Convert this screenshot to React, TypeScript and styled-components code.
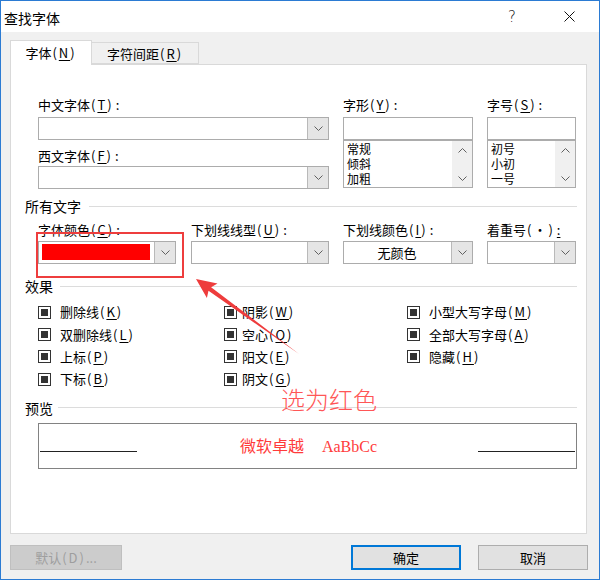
import React from "react";
import styled, { createGlobalStyle } from "styled-components";

const Global = createGlobalStyle`
  html, body { margin: 0; padding: 0; background: #ffffff; }
  body { font-family: "Noto Sans CJK SC", "Noto Sans", sans-serif; color: #000; }
  * { box-sizing: border-box; }
`;

const Window = styled.div`
  position: relative;
  width: 600px;
  height: 580px;
  border: 1px solid #2b7bd3;
  display: flex;
  flex-direction: column;
  background: #f0f0f0;
  overflow: hidden;
`;

const TitleBar = styled.div`
  height: 31px;
  flex-shrink: 0;
  background: #ffffff;
  display: flex;
  align-items: center;
  padding: 0 7px 0 3px;
`;

const Title = styled.div`
  flex: 1;
  font-size: 14px;
  line-height: 16px;
  margin-top: 2px;
`;

const CaptionButton = styled.div`
  width: 46px;
  height: 31px;
  display: flex;
  align-items: center;
  justify-content: center;
  font-family: "DejaVu Sans", sans-serif;
  font-weight: 300;
  font-size: 15px;
  color: #111;
  & + & { margin-left: 11px; }
`;

const Body = styled.div`
  flex: 1;
  display: flex;
  flex-direction: column;
  padding: 8px 12px 0 9px;
`;

const TabRow = styled.div`
  height: 24px;
  display: flex;
  align-items: flex-end;
  position: relative;
  z-index: 1;
`;

const Tab = styled.div<{ $active?: boolean; $w: number }>`
  width: ${(p) => p.$w}px;
  height: ${(p) => (p.$active ? 25 : 22)}px;
  margin-bottom: ${(p) => (p.$active ? -1 : 0)}px;
  margin-left: ${(p) => (p.$active ? 0 : -1)}px;
  border: 1px solid #d9d9d9;
  border-bottom: ${(p) => (p.$active ? "none" : "1px solid #d9d9d9")};
  background: ${(p) => (p.$active ? "#ffffff" : "#f0f0f0")};
  display: flex;
  align-items: center;
  justify-content: center;
  font-size: 13px;
  padding-bottom: ${(p) => (p.$active ? 2 : 0)}px;
`;

const Panel = styled.div`
  height: 470px;
  flex-shrink: 0;
  background: #ffffff;
  border: 1px solid #d9d9d9;
  padding: 32px 9px 0 14px;
  display: flex;
  flex-direction: column;
`;

const TopGrid = styled.div`
  margin-left: 13px;
  display: grid;
  grid-template-columns: 291px 130px 89px;
  column-gap: 14px;
`;

const Column = styled.div`
  display: flex;
  flex-direction: column;
`;

const Label = styled.div<{ $mt?: number }>`
  height: 16px;
  line-height: 16px;
  font-size: 13px;
  white-space: nowrap;
  margin-top: ${(p) => p.$mt ?? 0}px;
`;

const Mnemonic = styled.span`
  margin-left: 1px;
  letter-spacing: 2px;
  u { text-decoration-thickness: 1px; text-underline-offset: 2px; }
`;

const Tail = styled.span`
  margin-left: 2px;
  u { text-decoration-thickness: 1px; text-underline-offset: 2px; }
`;

const ComboBox = styled.div<{ $w?: number; $mt?: number }>`
  width: ${(p) => (p.$w ? `${p.$w}px` : "100%")};
  height: 23px;
  margin-top: ${(p) => p.$mt ?? 0}px;
  border: 1px solid #acacac;
  background: #ffffff;
  display: flex;
  align-items: stretch;
`;

const ComboValue = styled.div<{ $center?: boolean }>`
  flex: 1;
  display: flex;
  align-items: center;
  justify-content: ${(p) => (p.$center ? "center" : "flex-start")};
  font-size: 13px;
  padding: 2px 4px 3px 3px;
`;

const ColorSwatch = styled.div`
  width: 100%;
  height: 100%;
  background: #ff0000;
`;

const DropButton = styled.div`
  width: 21px;
  background: #e5e5e5;
  border-left: 1px solid #b9b9b9;
  display: flex;
  align-items: center;
  justify-content: center;
`;

const TextBox = styled.div`
  height: 23px;
  margin-top: 4px;
  border: 1px solid #acacac;
  background: #fff;
`;

const ListBox = styled.div`
  height: 48px;
  border: 1px solid #acacac;
  background: #fff;
  display: flex;
`;

const ListItems = styled.div`
  flex: 1;
  padding: 0 0 0 3px;
  display: flex;
  flex-direction: column;
`;

const ListItem = styled.div`
  height: 15px;
  font-size: 12px;
  line-height: 15px;
`;

const ScrollTrack = styled.div`
  width: 20px;
  background: #f0f0f0;
  display: flex;
  flex-direction: column;
  justify-content: space-between;
  align-items: center;
  padding: 7px 0 6px;
`;

const GroupHeader = styled.div<{ $mt: number; $gap: number }>`
  height: 16px;
  margin-top: ${(p) => p.$mt}px;
  display: flex;
  align-items: center;
  font-size: 14px;
  line-height: 16px;
  gap: ${(p) => p.$gap}px;
  &::after {
    content: "";
    flex: 1;
    height: 1px;
    background: #dcdcdc;
  }
`;

const FieldRow = styled.div`
  margin-left: 13px;
  margin-top: 8px;
  display: grid;
  grid-template-columns: 153px 152px 144px 89px;
`;

const CheckGrid = styled.div`
  margin-left: 13px;
  margin-top: 7px;
  display: grid;
  grid-template-columns: 186px 183px 1fr;
  grid-auto-rows: 22.4px;
`;

const CheckItem = styled.div<{ $gap: number }>`
  display: flex;
  align-items: center;
  gap: ${(p) => p.$gap}px;
  font-size: 13px;
  line-height: 16px;
  white-space: nowrap;
`;

const CheckBox = styled.div`
  width: 13px;
  height: 13px;
  border: 1px solid #333;
  background: #fff;
  display: flex;
  align-items: center;
  justify-content: center;
  &::after {
    content: "";
    width: 7px;
    height: 7px;
    background: #333;
  }
`;

const Preview = styled.div`
  margin-left: 13px;
  margin-top: 7px;
  height: 46px;
  border: 1px solid #828282;
  display: flex;
  align-items: center;
  justify-content: space-between;
  padding: 0 1px;
`;

const PreviewLine = styled.div`
  width: 97px;
  height: 1px;
  background: #222;
  align-self: flex-end;
  margin-bottom: 16px;
`;

const PreviewText = styled.div`
  color: #ff3b3b;
  font-size: 16px;
  display: flex;
  align-items: baseline;
  margin-top: -1px;
  margin-left: 2px;
`;

const PreviewLatin = styled.span`
  font-family: "Liberation Serif", serif;
  font-size: 16px;
  margin-left: 18px;
`;

const Footer = styled.div`
  margin-top: 11px;
  margin-right: -1px;
  display: flex;
  align-items: center;
`;

const Button = styled.div<{ $w: number; $variant?: "default" | "disabled" | "normal" }>`
  width: ${(p) => p.$w}px;
  height: 25px;
  display: flex;
  align-items: center;
  justify-content: center;
  font-size: 13px;
  background: ${(p) => (p.$variant === "disabled" ? "#cccccc" : "#e1e1e1")};
  color: ${(p) => (p.$variant === "disabled" ? "#9e9e9e" : "#000")};
  border: ${(p) =>
    p.$variant === "default"
      ? "2px solid #0078d7"
      : p.$variant === "disabled"
      ? "1px solid #bfbfbf"
      : "1px solid #adadad"};
`;

const Spacer = styled.div`
  flex: 1;
`;

const CancelGap = styled.div`
  width: 17px;
`;

const HighlightBox = styled.div`
  position: absolute;
  left: 35px;
  top: 231px;
  width: 148px;
  height: 46px;
  border: 2px solid #ee3d3d;
`;

const Annotation = styled.div`
  position: absolute;
  left: 280px;
  top: 387px;
  font-size: 24px;
  line-height: 22px;
  color: #ff5656;
  font-weight: 300;
`;

const ArrowSvg = styled.svg`
  position: absolute;
  left: 190px;
  top: 273px;
`;

const Chevron = ({ up }: { up?: boolean }) => (
  <svg width="9" height="5" viewBox="0 0 9 5">
    <path
      d={up ? "M0.5 4.5 L4.5 0.5 L8.5 4.5" : "M0.5 0.5 L4.5 4.5 L8.5 0.5"}
      fill="none"
      stroke="#606060"
      strokeWidth="1"
    />
  </svg>
);

const Combo = ({ w, mt, value, center, color }: { w?: number; mt?: number; value?: string; center?: boolean; color?: boolean }) => (
  <ComboBox $w={w} $mt={mt}>
    <ComboValue $center={center}>{color ? <ColorSwatch /> : value}</ComboValue>
    <DropButton>
      <Chevron />
    </DropButton>
  </ComboBox>
);

const L = ({ text, k, tail }: { text: string; k: string; tail?: React.ReactNode }) => (
  <>
    {text}
    <Mnemonic>
      (<u>{k}</u>)
    </Mnemonic>
    {tail ? <Tail>{tail}</Tail> : null}
  </>
);

const checks: { text: string; k: string }[] = [
  { text: "删除线", k: "K" },
  { text: "阴影", k: "W" },
  { text: "小型大写字母", k: "M" },
  { text: "双删除线", k: "L" },
  { text: "空心", k: "O" },
  { text: "全部大写字母", k: "A" },
  { text: "上标", k: "P" },
  { text: "阳文", k: "E" },
  { text: "隐藏", k: "H" },
  { text: "下标", k: "B" },
  { text: "阴文", k: "G" },
];

const middle = new Set(["阴影", "空心", "阳文", "阴文"]);

export default function App() {
  return (
    <>
      <Global />
      <Window>
        <TitleBar>
          <Title>查找字体</Title>
          <CaptionButton>?</CaptionButton>
          <CaptionButton>
            <svg width="11" height="11" viewBox="0 0 11 11">
              <path d="M0.5 0.5 L10.5 10.5 M10.5 0.5 L0.5 10.5" stroke="#111" strokeWidth="1" />
            </svg>
          </CaptionButton>
        </TitleBar>
        <Body>
          <TabRow>
            <Tab $active $w={82}>
              <L text="字体" k="N" />
            </Tab>
            <Tab $w={108}>
              <L text="字符间距" k="R" />
            </Tab>
          </TabRow>
          <Panel>
            <TopGrid>
              <Column>
                <Label>
                  <L text="中文字体" k="T" tail=":" />
                </Label>
                <Combo mt={4} />
                <Label $mt={8}>
                  <L text="西文字体" k="F" tail=":" />
                </Label>
                <Combo mt={2} />
              </Column>
              <Column>
                <Label>
                  <L text="字形" k="Y" tail=":" />
                </Label>
                <TextBox />
                <ListBox>
                  <ListItems>
                    <ListItem>常规</ListItem>
                    <ListItem>倾斜</ListItem>
                    <ListItem>加粗</ListItem>
                  </ListItems>
                  <ScrollTrack>
                    <Chevron up />
                    <Chevron />
                  </ScrollTrack>
                </ListBox>
              </Column>
              <Column>
                <Label>
                  <L text="字号" k="S" tail=":" />
                </Label>
                <TextBox />
                <ListBox>
                  <ListItems>
                    <ListItem>初号</ListItem>
                    <ListItem>小初</ListItem>
                    <ListItem>一号</ListItem>
                  </ListItems>
                  <ScrollTrack>
                    <Chevron up />
                    <Chevron />
                  </ScrollTrack>
                </ListBox>
              </Column>
            </TopGrid>

            <GroupHeader $mt={9} $gap={8}>所有文字</GroupHeader>
            <FieldRow>
              <Column>
                <Label>
                  <L text="字体颜色" k="C" tail=":" />
                </Label>
                <Combo w={138} mt={3} color />
              </Column>
              <Column>
                <Label>
                  <L text="下划线线型" k="U" tail=":" />
                </Label>
                <Combo w={138} mt={3} />
              </Column>
              <Column>
                <Label>
                  <L text="下划线颜色" k="I" tail=":" />
                </Label>
                <Combo w={130} mt={3} value="无颜色" center />
              </Column>
              <Column>
                <Label>
                  着重号<Mnemonic>(·)</Mnemonic>
                  <Tail>
                    <u>:</u>
                  </Tail>
                </Label>
                <Combo w={89} mt={3} />
              </Column>
            </FieldRow>

            <GroupHeader $mt={14} $gap={7}>效果</GroupHeader>
            <CheckGrid>
              {checks.map((c) => (
                <CheckItem key={c.text} $gap={middle.has(c.text) ? 5 : 9}>
                  <CheckBox />
                  <span>
                    <L text={c.text} k={c.k} />
                  </span>
                </CheckItem>
              ))}
            </CheckGrid>

            <GroupHeader $mt={9} $gap={5}>预览</GroupHeader>
            <Preview>
              <PreviewLine />
              <PreviewText>
                微软卓越<PreviewLatin>AaBbCc</PreviewLatin>
              </PreviewText>
              <PreviewLine />
            </Preview>
          </Panel>
          <Footer>
            <Button $w={112} $variant="disabled">
              默认<Mnemonic>(D)</Mnemonic>...
            </Button>
            <Spacer />
            <Button $w={110} $variant="default">
              确定
            </Button>
            <CancelGap />
            <Button $w={110}>取消</Button>
          </Footer>
        </Body>

        <HighlightBox />
        <ArrowSvg width="115" height="85" viewBox="0 0 115 85">
          <polygon
            points="5,5 26.5,9.5 20.1,13.2 108,80 17.5,16.8 15.9,24.1"
            fill="#ee3c3c"
          />
        </ArrowSvg>
        <Annotation>选为红色</Annotation>
      </Window>
    </>
  );
}
